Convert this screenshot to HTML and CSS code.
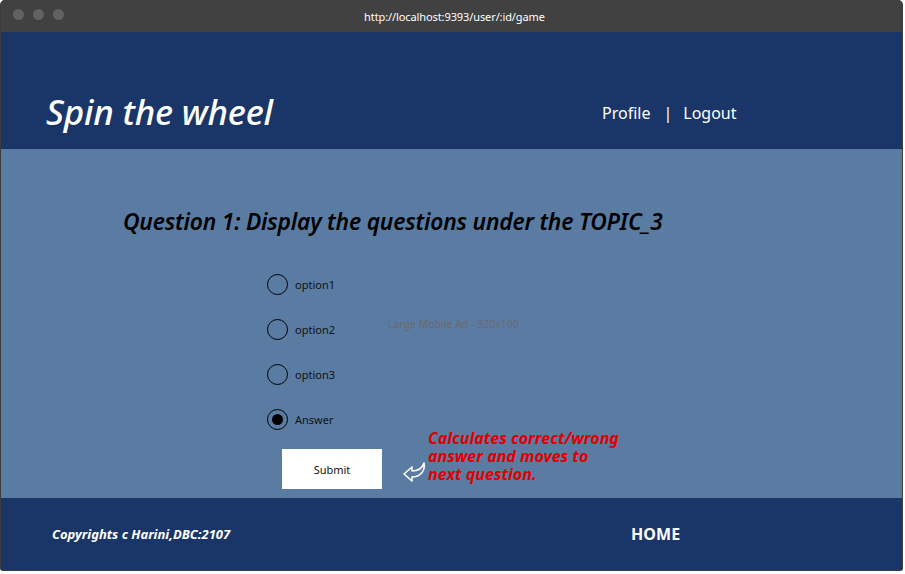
FILE: index.html
```html
<!DOCTYPE html>
<html>
<head>
<meta charset="utf-8">
<link rel="stylesheet" href="styles.css">
</head>
<body>
<div class="window">
  <div class="titlebar">
    <div class="dots"><span></span><span></span><span></span></div>
    <div class="url">http://localhost:9393/user/:id/game</div>
  </div>
  <header class="header">
    <h1 class="brand">Spin the wheel</h1>
    <nav class="nav"><a>Profile</a><span class="sep">|</span><a>Logout</a></nav>
  </header>
  <main class="main">
    <h2 class="question">Question 1: Display the questions under the TOPIC_3</h2>
    <div class="body">
      <div class="options">
        <label class="opt"><span class="radio"></span>option1</label>
        <label class="opt"><span class="radio"></span>option2</label>
        <label class="opt"><span class="radio"></span>option3</label>
        <label class="opt"><span class="radio checked"></span>Answer</label>
        <div class="submit-row">
          <button class="submit">Submit</button>
          <svg class="arrow" width="26" height="24" viewBox="0 0 26 24"><path d="M2 14 L10 7 L10 11 C16 11 20 9 22 3 C23.5 11 18 17 10 17 L10 21 Z" fill="none" stroke="#fff" stroke-width="1.6" stroke-linejoin="round"/></svg>
          <p class="note">Calculates correct/wrong<br>answer and moves to<br>next question.</p>
        </div>
      </div>
      <div class="ad">Large Mobile Ad - 320x100</div>
    </div>
  </main>
  <footer class="footer">
    <span class="copy">Copyrights c Harini,DBC:2107</span>
    <span class="home">HOME</span>
  </footer>
</div>
</body>
</html>
```
FILE: styles.css
```css
* { box-sizing: border-box; }
html, body { margin: 0; padding: 0; background: #fff; }
body { font-family: "Noto Sans", "Open Sans", sans-serif; }
.window {
  width: 903px;
  height: 571px;
  border: 1px solid #3c3c3c;
  border-top: none;
  border-radius: 5px 5px 3px 3px;
  overflow: hidden;
  display: flex;
  flex-direction: column;
  background: #1a3668;
}
.titlebar {
  height: 32px;
  background: #414141;
  position: relative;
  display: flex;
  align-items: center;
  justify-content: center;
}
.dots { position: absolute; left: 12px; top: 9px; display: flex; gap: 9px; }
.dots span { width: 11px; height: 11px; border-radius: 50%; background: #626262; }
.url { color: #fff; font-size: 11px; letter-spacing: -0.1px; margin-left: 6px; }
.header {
  height: 117px;
  background: #1a3668;
  display: flex;
  align-items: center;
  padding: 42px 0 0 45px;
}
.brand {
  margin: 0;
  color: #fff;
  font-style: italic;
  font-weight: 500;
  font-size: 35px;
  letter-spacing: -0.2px;
  width: 556px;
  line-height: 40px;
}
.nav { color: #fff; font-size: 16px; display: flex; align-items: center; margin-top: 3px; }
.nav .sep { margin: 0 11px 0 13px; }
.main {
  height: 349px;
  background: #5a7ca3;
  padding: 58px 0 0 122px;
}
.question {
  margin: 0;
  font-style: italic;
  font-weight: 600;
  font-size: 22.8px;
  letter-spacing: -0.2px;
  color: #000;
  line-height: 30px;
}
.body { display: flex; padding: 25px 0 0 144px; }
.options { display: flex; flex-direction: column; width: 121px; }
.opt {
  display: flex;
  align-items: center;
  height: 45px;
  font-size: 11px;
  color: #111;
  gap: 7px;
  margin-top: -12px;
  margin-bottom: 12px;
}
.opt:first-child { margin-top: 0; }
.radio {
  width: 21px; height: 21px;
  border: 1.5px solid #000;
  border-radius: 50%;
  display: flex; align-items: center; justify-content: center;
}
.radio.checked::after {
  content: "";
  width: 11px; height: 11px;
  border-radius: 50%;
  background: #000;
}
.submit-row { display: flex; align-items: center; margin: -5px 0 0 15px; width: 380px; }
.submit {
  width: 100px; height: 40px;
  background: #fff;
  border: none;
  font-family: inherit;
  font-size: 11px;
  color: #111;
  padding: 0;
}
.arrow { margin: 6px 0 0 20px; }
.note {
  margin: -27px 0 0 0;
  color: #e00000;
  font-style: italic;
  font-weight: 700;
  font-size: 16px;
  line-height: 18px;
  letter-spacing: 0;
}
.ad { font-size: 10.5px; color: #6a6a6a; padding-top: 55px; }
.footer {
  flex: 1;
  background: #1a3668;
  display: flex;
  align-items: center;
  padding: 0 0 0 51px;
  color: #fff;
}
.copy { font-style: italic; font-weight: 700; font-size: 13px; width: 579px; }
.home { font-weight: 700; font-size: 16px; letter-spacing: 0.1px; }
```
